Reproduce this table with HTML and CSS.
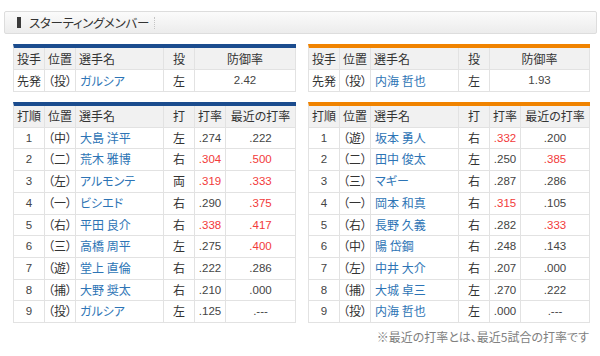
FILE: index.html
```html
<!DOCTYPE html>
<html lang="ja">
<head>
<meta charset="utf-8">
<link rel="stylesheet" href="styles.css">
</head>
<body>
<div class="page">
  <div class="title-bar">
    <span class="title-mark"></span>
    <span class="title-text">スターティングメンバー</span>
    <span class="title-sep"></span>
  </div>

  <div class="grid">
    <table class="tbl blue">
      <colgroup><col class="c-n"><col class="c-n"><col class="c-name"><col class="c-n"><col class="c-era"></colgroup>
      <tr class="head"><td class="l">投手</td><td class="l">位置</td><td class="l">選手名</td><td>投</td><td>防御率</td></tr>
      <tr><td class="l">先発</td><td class="l">（投）</td><td class="name">ガルシア</td><td>左</td><td class="num">2.42</td></tr>
    </table>
    <table class="tbl orange">
      <colgroup><col class="c-n"><col class="c-n"><col class="c-name"><col class="c-n"><col class="c-era2"></colgroup>
      <tr class="head"><td class="l">投手</td><td class="l">位置</td><td class="l">選手名</td><td>投</td><td>防御率</td></tr>
      <tr><td class="l">先発</td><td class="l">（投）</td><td class="name">内海 哲也</td><td>左</td><td class="num">1.93</td></tr>
    </table>

    <table class="tbl blue lineup">
      <colgroup><col class="c-n"><col class="c-n"><col class="c-name"><col class="c-n"><col class="c-n"><col class="c-rec"></colgroup>
      <tr class="head"><td>打順</td><td class="l">位置</td><td class="l">選手名</td><td>打</td><td>打率</td><td>最近の打率</td></tr>
      <tr><td class="num">1</td><td class="l">（中）</td><td class="name">大島 洋平</td><td>左</td><td class="num">.274</td><td class="num">.222</td></tr>
      <tr><td class="num">2</td><td class="l">（二）</td><td class="name">荒木 雅博</td><td>右</td><td class="num red">.304</td><td class="num red">.500</td></tr>
      <tr><td class="num">3</td><td class="l">（左）</td><td class="name">アルモンテ</td><td>両</td><td class="num red">.319</td><td class="num red">.333</td></tr>
      <tr><td class="num">4</td><td class="l">（一）</td><td class="name">ビシエド</td><td>右</td><td class="num">.290</td><td class="num red">.375</td></tr>
      <tr><td class="num">5</td><td class="l">（右）</td><td class="name">平田 良介</td><td>右</td><td class="num red">.338</td><td class="num red">.417</td></tr>
      <tr><td class="num">6</td><td class="l">（三）</td><td class="name">高橋 周平</td><td>左</td><td class="num">.275</td><td class="num red">.400</td></tr>
      <tr><td class="num">7</td><td class="l">（遊）</td><td class="name">堂上 直倫</td><td>右</td><td class="num">.222</td><td class="num">.286</td></tr>
      <tr><td class="num">8</td><td class="l">（捕）</td><td class="name">大野 奨太</td><td>右</td><td class="num">.210</td><td class="num">.000</td></tr>
      <tr><td class="num">9</td><td class="l">（投）</td><td class="name">ガルシア</td><td>左</td><td class="num">.125</td><td class="num">.---</td></tr>
    </table>
    <div class="right-col">
      <table class="tbl orange lineup">
        <colgroup><col class="c-n"><col class="c-n"><col class="c-name"><col class="c-n"><col class="c-n"><col class="c-rec2"></colgroup>
        <tr class="head"><td>打順</td><td class="l">位置</td><td class="l">選手名</td><td>打</td><td>打率</td><td>最近の打率</td></tr>
        <tr><td class="num">1</td><td class="l">（遊）</td><td class="name">坂本 勇人</td><td>右</td><td class="num red">.332</td><td class="num">.200</td></tr>
        <tr><td class="num">2</td><td class="l">（二）</td><td class="name">田中 俊太</td><td>左</td><td class="num">.250</td><td class="num red">.385</td></tr>
        <tr><td class="num">3</td><td class="l">（三）</td><td class="name">マギー</td><td>右</td><td class="num">.287</td><td class="num">.286</td></tr>
        <tr><td class="num">4</td><td class="l">（一）</td><td class="name">岡本 和真</td><td>右</td><td class="num red">.315</td><td class="num">.105</td></tr>
        <tr><td class="num">5</td><td class="l">（右）</td><td class="name">長野 久義</td><td>右</td><td class="num">.282</td><td class="num red">.333</td></tr>
        <tr><td class="num">6</td><td class="l">（中）</td><td class="name">陽 岱鋼</td><td>右</td><td class="num">.248</td><td class="num">.143</td></tr>
        <tr><td class="num">7</td><td class="l">（左）</td><td class="name">中井 大介</td><td>右</td><td class="num">.207</td><td class="num">.000</td></tr>
        <tr><td class="num">8</td><td class="l">（捕）</td><td class="name">大城 卓三</td><td>左</td><td class="num">.270</td><td class="num">.222</td></tr>
        <tr><td class="num">9</td><td class="l">（投）</td><td class="name">内海 哲也</td><td>左</td><td class="num">.000</td><td class="num">.---</td></tr>
      </table>
      <p class="note">※最近の打率とは、最近5試合の打率です</p>
    </div>
  </div>
</div>
</body>
</html>
```

FILE: styles.css
```css
html, body {
  margin: 0;
  padding: 0;
  background: #ffffff;
}

.page {
  padding: 11px 3px 0 4px;
  font-family: "Noto Sans CJK JP", "Liberation Sans", sans-serif;
  font-size: 12px;
  font-feature-settings: "palt" 1;
  color: #333333;
}

.title-bar {
  height: 21px;
  border: 1px solid #dddddd;
  border-radius: 2px;
  background: linear-gradient(#fbfbfb, #ececec);
  display: flex;
  align-items: center;
  padding-left: 12px;
}

.title-mark {
  width: 4px;
  height: 11px;
  background: #3a3a3a;
  margin-right: 8px;
}

.title-text {
  font-size: 12.5px;
  letter-spacing: -0.3px;
  color: #333333;
  line-height: 21px;
}

.title-sep {
  margin-left: 5px;
  height: 12px;
  border-left: 1px dotted #c4c4c4;
}

.grid {
  margin: 10px 0 0 9px;
  width: 576px;
  display: grid;
  grid-template-columns: 282px 281px;
  column-gap: 13px;
  row-gap: 10px;
  align-items: start;
}

.tbl {
  border-collapse: separate;
  border-spacing: 0;
  table-layout: fixed;
  width: 100%;
  border-left: 1px solid #e2e2e2;
}

.tbl.blue { border-top: 4px solid #1b4c8e; }
.tbl.orange { border-top: 4px solid #f08300; }

.tbl td {
  padding: 0;
  line-height: 21px;
  border-right: 1px solid #e2e2e2;
  border-bottom: 1px solid #e2e2e2;
  text-align: center;
  white-space: nowrap;
  overflow: hidden;
  color: #333333;
}

.lineup td { line-height: 20.7px; }

.tbl td.l { text-align: left; padding-left: 3px; }
.tbl td.name { text-align: left; padding-left: 4px; color: #2d74b5; }

.tbl tr.head td { background: #f1f1f1; color: #333333; }

.tbl td.num {
  font-family: "Liberation Sans", sans-serif;
  font-size: 11.5px;
  color: #444444;
}
.tbl td.num.red { color: #f23a3a; }

.c-n { width: 31px; }
.c-name { width: 88px; }
.c-era { width: 101px; }
.c-era2 { width: 100px; }
.c-rec { width: 70px; }
.c-rec2 { width: 69px; }

.note {
  margin: 6px 0 0;
  text-align: right;
  font-size: 12px;
  color: #808080;
  line-height: 16px;
}
```
